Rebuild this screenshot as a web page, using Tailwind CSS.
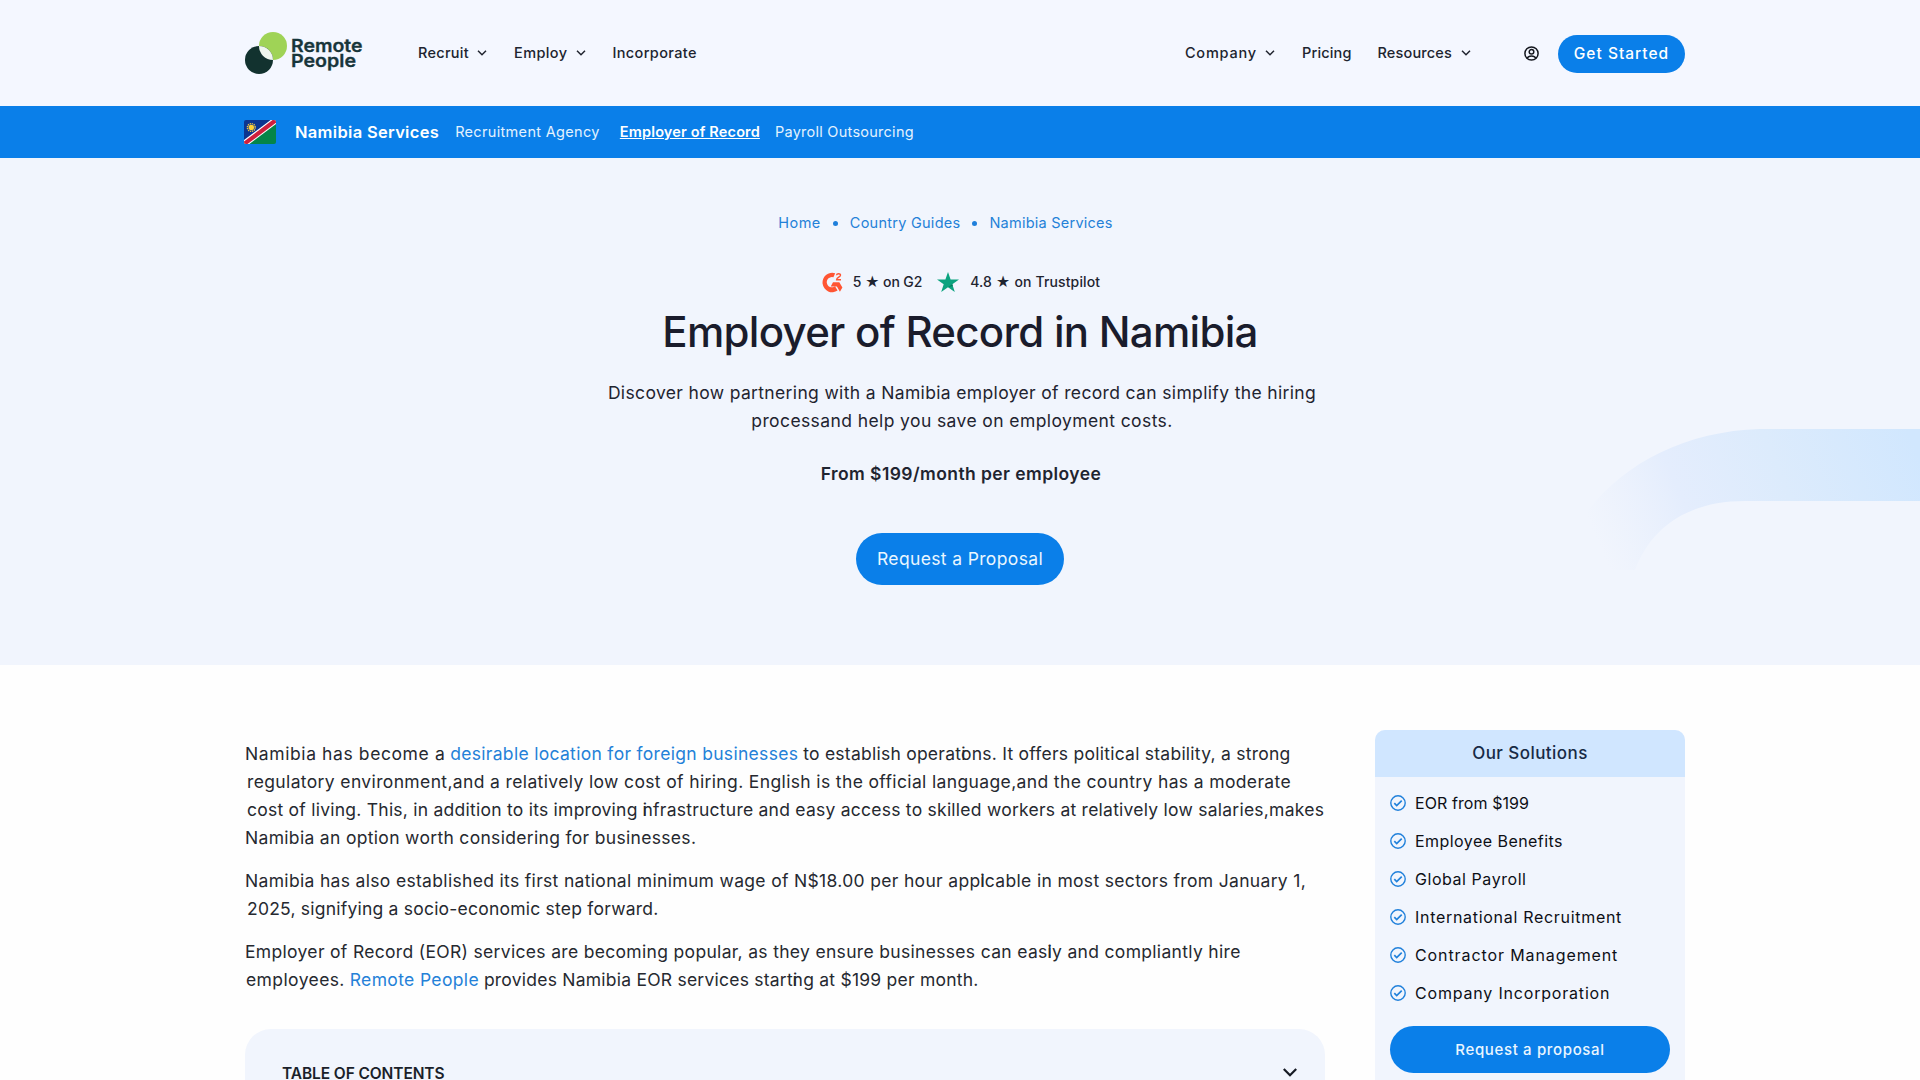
<!DOCTYPE html>
<html lang="en">
<head>
    <meta charset="UTF-8">
    <meta name="viewport" content="width=device-width, initial-scale=1.0">
    <title>Employer of Record in Namibia | Remote People</title>
    <script src="https://cdn.jsdelivr.net/npm/@tailwindcss/browser@4"></script>
</head>
<body class="bg-[#fefefe] h-[1080px] overflow-hidden font-[Inter,sans-serif] text-[#1f2430]">

    <!-- Header -->
    <header class="bg-[#f4f7ff] h-[106px]">
        <div class="w-[1440px] h-full ml-[245px] flex items-center justify-between text-[14.5px] font-medium text-[#20242f] whitespace-nowrap">
            <div class="flex items-center">
                <svg class="w-[120px] h-[44px]" viewBox="0 0 120 44">
                    <circle cx="28" cy="15" r="14" fill="#9fd356"/>
                    <circle cx="14" cy="29" r="14" fill="#12322f"/>
                    <path d="M14 15A14 14 0 0 1 28 29A14 14 0 0 1 14 15Z" fill="#eef6ee"/>
                    <text x="46" y="20.7" font-family="Inter" font-size="17.5" font-weight="600" fill="#17353a" stroke="#17353a" stroke-width=".3" textLength="71.5" lengthAdjust="spacingAndGlyphs">Remote</text>
                    <text x="46" y="35.7" font-family="Inter" font-size="17.5" font-weight="600" fill="#17353a" stroke="#17353a" stroke-width=".3" textLength="65" lengthAdjust="spacingAndGlyphs">People</text>
                </svg>
                <nav class="flex items-center ml-[53px]">
                    <a class="flex items-center tracking-[0.29px]">Recruit
                        <svg class="w-[10px] h-[6px] ml-[8px]" viewBox="0 0 10 6" fill="none" stroke="#20242f" stroke-width="1.5"><path d="M1 .8l4 4 4-4"/></svg>
                    </a>
                    <a class="flex items-center tracking-[0.4px] ml-[27px]">Employ
                        <svg class="w-[10px] h-[6px] ml-[8px]" viewBox="0 0 10 6" fill="none" stroke="#20242f" stroke-width="1.5"><path d="M1 .8l4 4 4-4"/></svg>
                    </a>
                    <a class="tracking-[0.35px] ml-[27px]">Incorporate</a>
                </nav>
            </div>
            <div class="flex items-center">
                <a class="flex items-center tracking-[0.8px]">Company
                    <svg class="w-[10px] h-[6px] ml-[8px]" viewBox="0 0 10 6" fill="none" stroke="#20242f" stroke-width="1.5"><path d="M1 .8l4 4 4-4"/></svg>
                </a>
                <a class="tracking-[0.15px] ml-[27px]">Pricing</a>
                <a class="flex items-center tracking-[0.16px] ml-[26px]">Resources
                    <svg class="w-[10px] h-[6px] ml-[9px]" viewBox="0 0 10 6" fill="none" stroke="#20242f" stroke-width="1.5"><path d="M1 .8l4 4 4-4"/></svg>
                </a>
                <svg class="w-[15px] h-[15px] ml-[53px] mt-px" viewBox="0 0 15 15" fill="none" stroke="#15181f" stroke-width="1.5">
                    <circle cx="7.5" cy="7.5" r="6.6"/><circle cx="7.5" cy="5.8" r="2.3"/><path d="M3.2 12.2c.8-1.7 2.2-2.2 4.3-2.2s3.5.5 4.3 2.2"/>
                </svg>
                <a class="w-[127px] h-[38px] ml-[19px] mt-px rounded-full bg-[#0a7fe9] text-white text-[15.5px] tracking-[1.01px] flex items-center justify-center">Get Started</a>
            </div>
        </div>
    </header>

    <!-- Country bar -->
    <div class="bg-[#0a7fe9] h-[52px]">
        <div class="w-[1440px] h-full ml-[245px] flex items-center text-[14.5px] text-[#e3f2fe] whitespace-nowrap">
            <svg class="w-[32px] h-[24px] -ml-px" viewBox="0 0 32 24">
                <defs><clipPath id="flag"><rect width="32" height="24" rx="2"/></clipPath></defs>
                <g clip-path="url(#flag)">
                    <path d="M0 0H32L0 24Z" fill="#0c3590"/>
                    <path d="M32 0V24H0Z" fill="#048548"/>
                    <path d="M-2 25.5L34-1.5" stroke="#fff" stroke-width="6.4"/>
                    <path d="M-2 25.5L34-1.5" stroke="#cf1f3d" stroke-width="4.2"/>
                    <circle cx="7.3" cy="7.5" r="3.9" fill="none" stroke="#f6c945" stroke-width="1.4" stroke-dasharray="1.2 .84"/>
                    <circle cx="7.3" cy="7.5" r="2.7" fill="#ffd034"/>
                </g>
            </svg>
            <a class="ml-[19px] text-[16.5px] font-semibold tracking-[0.31px] text-white">Namibia Services</a>
            <a class="ml-[16px] tracking-[0.33px]">Recruitment Agency</a>
            <a class="ml-[20px] font-semibold tracking-[0.16px] text-white underline">Employer of Record</a>
            <a class="ml-[15px] tracking-[0.26px]">Payroll Outsourcing</a>
        </div>
    </div>

    <!-- Hero -->
    <section class="relative bg-[#f1f5fd] h-[507px] pt-[55px] flex flex-col items-center whitespace-nowrap">
        <svg class="absolute right-0 top-[262px] w-[360px] h-[180px]" viewBox="0 0 360 180" fill="none">
            <defs>
                <linearGradient id="ribbon" gradientUnits="userSpaceOnUse" x1="40" y1="145" x2="350" y2="15">
                    <stop offset="0.02" stop-color="#e8effc" stop-opacity="0"/>
                    <stop offset="0.3" stop-color="#e4edfd"/>
                    <stop offset="0.6" stop-color="#dcebfc"/>
                    <stop offset="1" stop-color="#d1e7fe"/>
                </linearGradient>
            </defs>
            <path d="M360 9H200C125 11 60 45 25 95L20 150H75C90 110 125 81 185 81H360Z" fill="url(#ribbon)"/>
        </svg>

        <div class="relative flex items-center gap-[12px] h-5 pr-[29px] text-[14.5px] text-[#2481d8]">
            <a class="tracking-[0.45px]">Home</a>
            <span class="size-[5px] rounded-full bg-[#1f7fdb] mt-px"></span>
            <a class="tracking-[0.26px]">Country Guides</a>
            <span class="size-[5px] rounded-full bg-[#1f7fdb] mt-px"></span>
            <a class="tracking-[0.24px]">Namibia Services</a>
        </div>

        <div class="relative flex items-center h-5 mt-[39px] pl-[2px] text-sm font-medium">
            <svg class="w-[21px] h-[21px]" viewBox="0 0 21 21">
                <path d="M13.2 1.3A9.7 9.7 0 1 0 15.6 18.6L13 14.2A5.1 5.1 0 1 1 11.4 5.3Z" fill="#ff5533"/>
                <path d="M11 10.3H17.3L20.4 15.6L17.9 19.8L14.9 14.6H8.7Z" fill="#ff5533"/>
                <path d="M14.5 3.2C14.7 1.3 18.7 1.1 18.5 3.3C18.4 5 14.7 5.5 14.6 7.7H19" fill="none" stroke="#ff5533" stroke-width="1.4"/>
            </svg>
            <span class="ml-[10px] tracking-[-0.12px]">5 ★ on G2</span>
            <svg class="w-[22px] h-[20px] ml-[15px]" viewBox="0 0 22 20">
                <path d="M11 0l2.6 7.6H22l-6.7 4.7L17.8 20 11 15.2 4.2 20l2.5-7.7L0 7.6h8.4z" fill="#0ba37f"/>
                <path d="M15.3 12.3l.6 1.8L11 15.2z" fill="#087a5c"/>
            </svg>
            <span class="ml-[11px] tracking-[0.13px]">4.8 ★ on Trustpilot</span>
        </div>

        <h1 class="relative mt-[15px] text-[42px] leading-[50px] font-medium tracking-[-0.72px] text-[#1a1c2c]">Employer of Record in Namibia</h1>

        <p class="relative mt-[22px] pl-[4px] text-[17.5px] leading-[28px] text-center">
            <span class="tracking-[0.35px]">Discover how partnering with a Namibia employer of record can simplify the hiring</span><br>
            <span class="tracking-[0.4px]">processand help you save on employment costs.</span>
        </p>

        <p class="relative mt-[25px] pl-[2px] text-[17.5px] leading-[28px] font-semibold tracking-[0.42px]">From $199/month per employee</p>

        <a class="relative mt-[45px] w-[208px] h-[52px] pt-px rounded-full bg-[#0a7fe9] text-[#e9f6ff] text-[17.5px] tracking-[0.36px] flex items-center justify-center">Request a Proposal</a>
    </section>

    <div class="w-[1440px] h-[415px] ml-[245px] flex justify-between items-stretch whitespace-nowrap">

        <!-- Article -->
        <main class="w-[1080px] pt-[75px] text-[17.5px] leading-[28px] text-[#262930]">
            <p>
                <span class="tracking-[0.6px]">Namibia has become a</span>
                <a class="text-[#2481d8] tracking-[0.305px]">desirable location for foreign businesses</a>
                <span class="tracking-[0.25px]">to establish operat<span class="-mr-[4.8px]">i</span>ons. It offers political stability, a strong</span><br>
                <span class="ml-[2px] tracking-[0.365px]">regulatory environment,and a relatively low cost of hiring. English is the official language,and the country has a moderate</span><br>
                <span class="ml-[2px] tracking-[0.244px]">cost of living. This, in addition to its improving <span class="-mr-[4.8px]">i</span>nfrastructure and easy access to skilled workers at relatively low salaries,makes</span><br>
                <span class="tracking-[0.32px]">Namibia an option worth considering for businesses.</span>
            </p>
            <p class="mt-[15px]">
                <span class="tracking-[0.327px]">Namibia has also established its first national minimum wage of N$18.00 per hour appl<span class="-ml-[4.8px]">i</span>cable in most sectors from January 1,</span><br>
                <span class="ml-[2px] tracking-[0.22px]">2025, signifying a socio-economic step forward.</span>
            </p>
            <p class="mt-[15px]">
                <span class="tracking-[0.32px]">Employer of Record (EOR) services are becoming popular, as they ensure businesses can eas<span class="-mr-[4.8px]">i</span>ly and compliantly hire</span><br>
                <span class="ml-[1px] tracking-[0.4px]">employees.</span>
                <a class="text-[#2481d8] tracking-[0.35px]">Remote People</a>
                <span class="tracking-[0.232px]">provides Namibia EOR services start<span class="-mr-[4.8px]">i</span>ng at $199 per month.</span>
            </p>

            <!-- Table of contents -->
            <div class="mt-[35px] h-[51px] rounded-t-[26px] bg-[#f1f5fd] pt-[37px] pl-[37px] pr-[28px] flex justify-between items-start">
                <span class="text-[15.5px] leading-[15px] font-semibold tracking-[-0.1px] text-[#1a1f2a]">TABLE OF CONTENTS</span>
                <svg class="w-[14px] h-[9px] mt-[2px]" viewBox="0 0 14 9" fill="none" stroke="#161a24" stroke-width="2.2"><path d="M.8 1l6.2 6.2L13.2 1"/></svg>
            </div>
        </main>

        <!-- Solutions card -->
        <aside class="w-[310px] mt-[65px] rounded-t-[10px] overflow-hidden bg-[#f1f5fd]">
            <h2 class="h-[47px] pt-px flex items-center justify-center bg-[#d0e6ff] text-[17px] font-medium tracking-[0.44px] text-[#172a45]">Our Solutions</h2>
            <ul class="pt-[7px] pl-[15px] text-base leading-[38px] text-[#0d0f16]">
                <li class="flex items-center gap-[9px] tracking-[0.08px]">
                    <svg class="size-[16px]" viewBox="0 0 16 16" fill="none" stroke="#2181db" stroke-width="1.4"><circle cx="8" cy="8" r="7.2"/><path d="M4.3 8.2l2.4 2.4 5-5" stroke-width="1.7"/></svg>
                    EOR from $199
                </li>
                <li class="flex items-center gap-[9px] tracking-[0.45px]">
                    <svg class="size-[16px]" viewBox="0 0 16 16" fill="none" stroke="#2181db" stroke-width="1.4"><circle cx="8" cy="8" r="7.2"/><path d="M4.3 8.2l2.4 2.4 5-5" stroke-width="1.7"/></svg>
                    Employee Benefits
                </li>
                <li class="flex items-center gap-[9px] tracking-[0.55px]">
                    <svg class="size-[16px]" viewBox="0 0 16 16" fill="none" stroke="#2181db" stroke-width="1.4"><circle cx="8" cy="8" r="7.2"/><path d="M4.3 8.2l2.4 2.4 5-5" stroke-width="1.7"/></svg>
                    Global Payroll
                </li>
                <li class="flex items-center gap-[9px] tracking-[0.7px]">
                    <svg class="size-[16px]" viewBox="0 0 16 16" fill="none" stroke="#2181db" stroke-width="1.4"><circle cx="8" cy="8" r="7.2"/><path d="M4.3 8.2l2.4 2.4 5-5" stroke-width="1.7"/></svg>
                    International Recruitment
                </li>
                <li class="flex items-center gap-[9px] tracking-[0.9px]">
                    <svg class="size-[16px]" viewBox="0 0 16 16" fill="none" stroke="#2181db" stroke-width="1.4"><circle cx="8" cy="8" r="7.2"/><path d="M4.3 8.2l2.4 2.4 5-5" stroke-width="1.7"/></svg>
                    Contractor Management
                </li>
                <li class="flex items-center gap-[9px] tracking-[0.81px]">
                    <svg class="size-[16px]" viewBox="0 0 16 16" fill="none" stroke="#2181db" stroke-width="1.4"><circle cx="8" cy="8" r="7.2"/><path d="M4.3 8.2l2.4 2.4 5-5" stroke-width="1.7"/></svg>
                    Company Incorporation
                </li>
            </ul>
            <a class="mt-[14px] mx-[15px] h-[47px] pt-px rounded-full bg-[#0a7fe9] text-[#eaf6ff] text-[15px] font-medium tracking-[0.65px] flex items-center justify-center">Request a proposal</a>
        </aside>
    </div>

</body>
</html>
